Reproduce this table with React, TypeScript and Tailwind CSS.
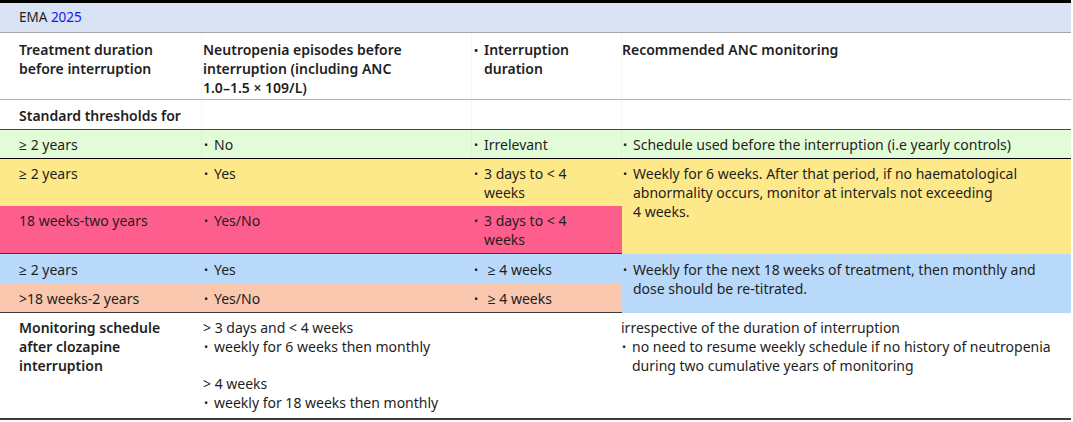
import React from "react";

const font = { fontFamily: '"Noto Sans", "Open Sans", Arial, sans-serif' };

function Bullet({ children, className = "" }: { children: React.ReactNode; className?: string }) {
  return (
    <div className={"flex " + className}>
      <span className="w-[11px] shrink-0 pl-[1px] text-[11px]">•</span>
      <span>{children}</span>
    </div>
  );
}

export default function App() {
  return (
    <div className="w-[1073px] h-[422px] bg-white text-[#1e1e1e] text-[14px] leading-[19px]" style={font}>
      <div className="w-[1071px]">
        <div className="h-[3px] bg-black" />
        <div className="h-[30px] bg-[#d9e3f4] border-b border-[#a6a6a6] pl-[19px] flex items-center text-[13.5px]">
          EMA&nbsp;<span className="text-[#1515f0]">2025</span>
        </div>

        {/* Header row */}
        <div className="grid grid-cols-[202px_270px_150px_449px] h-[67px] border-b border-[#b4b4b4] font-semibold">
          <div className="pl-[19px] pt-[7px] border-r border-black/[0.03]">
            Treatment duration
            <br />
            before interruption
          </div>
          <div className="pl-[1px] pt-[7px] border-r border-black/[0.03]">
            Neutropenia episodes before
            <br />
            interruption (including ANC
            <br />
            1.0–1.5 × 109/L)
          </div>
          <div className="pl-[1px] pt-[7px] border-r border-black/[0.03]">
            <Bullet>
              Interruption
              <br />
              duration
            </Bullet>
          </div>
          <div className="pt-[7px]">Recommended ANC monitoring</div>
        </div>

        {/* Standard thresholds */}
        <div className="grid grid-cols-[202px_270px_150px_449px] h-[30px] border-b border-[#474747]">
          <div className="pl-[19px] pt-[6px] font-semibold whitespace-nowrap border-r border-black/[0.03]">Standard thresholds for</div>
          <div className="border-r border-black/[0.03]" />
          <div className="border-r border-black/[0.03]" />
          <div />
        </div>

        {/* Green row */}
        <div className="grid grid-cols-[202px_270px_150px_449px] h-[29px] border-b border-black bg-[#e1fcd6]">
          <div className="pl-[19px] pt-[5px] border-r border-black/[0.03]">≥ 2 years</div>
          <div className="pl-[1px] pt-[5px] border-r border-black/[0.03]">
            <Bullet>No</Bullet>
          </div>
          <div className="pl-[1px] pt-[5px] border-r border-black/[0.03]">
            <Bullet>Irrelevant</Bullet>
          </div>
          <div className="pt-[5px]">
            <Bullet>Schedule used before the interruption (i.e yearly controls)</Bullet>
          </div>
        </div>

        {/* Coloured grouped rows */}
        <div className="grid grid-cols-[202px_270px_150px_449px] grid-rows-[47px_48px_29px_30px]">
          <div className="bg-[#fee98a] pl-[19px] pt-[5px]">≥ 2 years</div>
          <div className="bg-[#fee98a] pl-[1px] pt-[5px]">
            <Bullet>Yes</Bullet>
          </div>
          <div className="bg-[#fee98a] pl-[1px] pt-[5px]">
            <Bullet>
              3 days to &lt; 4
              <br />
              weeks
            </Bullet>
          </div>
          <div className="row-span-2 bg-[#fee98a] pt-[5px] pr-[22px]">
            <Bullet>
              Weekly for 6 weeks. After that period, if no haematological abnormality occurs, monitor at intervals not exceeding 4&nbsp;weeks.
            </Bullet>
          </div>

          <div className="bg-[#fe5e8e] pl-[19px] pt-[5px] border-b border-[#3c3c3c]">18 weeks-two years</div>
          <div className="bg-[#fe5e8e] pl-[1px] pt-[5px] border-b border-[#3c3c3c]">
            <Bullet>Yes/No</Bullet>
          </div>
          <div className="bg-[#fe5e8e] pl-[1px] pt-[5px] border-b border-[#3c3c3c]">
            <Bullet>
              3 days to &lt; 4
              <br />
              weeks
            </Bullet>
          </div>

          <div className="bg-[#b9d9fb] pl-[19px] pt-[6px]">≥ 2 years</div>
          <div className="bg-[#b9d9fb] pl-[1px] pt-[6px]">
            <Bullet>Yes</Bullet>
          </div>
          <div className="bg-[#b9d9fb] pl-[1px] pt-[6px]">
            <Bullet>&nbsp;≥ 4 weeks</Bullet>
          </div>
          <div className="row-span-2 bg-[#b9d9fb] pt-[6px] pr-[22px]">
            <Bullet>Weekly for the next 18 weeks of treatment, then monthly and dose should be re-titrated.</Bullet>
          </div>

          <div className="bg-[#fac7af] pl-[19px] pt-[6px] border-b border-[#3c3c3c]">&gt;18 weeks-2 years</div>
          <div className="bg-[#fac7af] pl-[1px] pt-[6px] border-b border-[#3c3c3c]">
            <Bullet>Yes/No</Bullet>
          </div>
          <div className="bg-[#fac7af] pl-[1px] pt-[6px] border-b border-[#3c3c3c]">
            <Bullet>&nbsp;≥ 4 weeks</Bullet>
          </div>
        </div>

        {/* Bottom section */}
        <div className="grid grid-cols-[202px_270px_150px_449px] h-[107px] border-b-2 border-[#3c3c3c]">
          <div className="pl-[19px] pt-[5px] font-semibold">
            Monitoring schedule
            <br />
            after clozapine
            <br />
            interruption
          </div>
          <div className="pl-[1px] pt-[5px]">
            <div>&gt; 3 days and &lt; 4 weeks</div>
            <Bullet>weekly for 6 weeks then monthly</Bullet>
            <div className="h-[18px]" />
            <div>&gt; 4 weeks</div>
            <Bullet>weekly for 18 weeks then monthly</Bullet>
          </div>
          <div />
          <div className="pt-[5px] -ml-[1px]">
            <div>irrespective of the duration of interruption</div>
            <Bullet>
              no need to resume weekly schedule if no history of neutropenia
              <br />
              during two cumulative years of monitoring
            </Bullet>
          </div>
        </div>
      </div>
    </div>
  );
}
